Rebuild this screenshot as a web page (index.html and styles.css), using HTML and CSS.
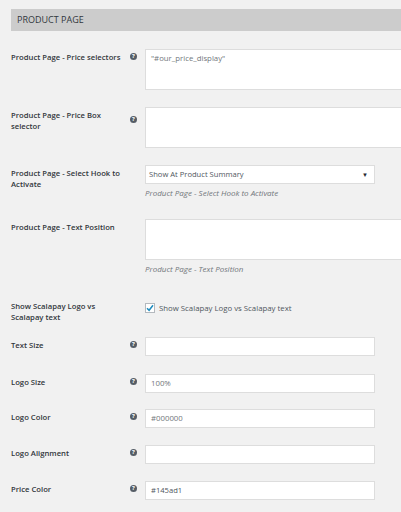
FILE: index.html
```html
<!DOCTYPE html>
<html>
<head>
<meta charset="utf-8">
<link rel="stylesheet" href="styles.css">
</head>
<body>
<div class="page">
  <div class="header">PRODUCT PAGE</div>

  <div class="row r1">
    <div class="lab"><span class="txt">Product Page - Price selectors</span><span class="help">?</span></div>
    <div class="field"><div class="area"><span class="val">"#our_price_display"</span></div></div>
  </div>

  <div class="row r2">
    <div class="lab"><span class="txt">Product Page - Price Box selector</span><span class="help">?</span></div>
    <div class="field"><div class="area"></div></div>
  </div>

  <div class="row r3">
    <div class="lab"><span class="txt">Product Page - Select Hook to Activate</span></div>
    <div class="field">
      <div class="select"><span class="val dark">Show At Product Summary</span><span class="arrow">▼</span></div>
      <div class="desc">Product Page - Select Hook to Activate</div>
    </div>
  </div>

  <div class="row r4">
    <div class="lab"><span class="txt">Product Page - Text Position</span></div>
    <div class="field">
      <div class="area"></div>
      <div class="desc">Product Page - Text Position</div>
    </div>
  </div>

  <div class="row r5">
    <div class="lab"><span class="txt">Show Scalapay Logo vs Scalapay text</span></div>
    <div class="field check">
      <span class="box"><svg width="8" height="8" viewBox="0 0 8 8"><path d="M1 4.2 L3.1 6.3 L7 1.2" fill="none" stroke="#1e8cbe" stroke-width="1.5"/></svg></span>
      <span class="ctext">Show Scalapay Logo vs Scalapay text</span>
    </div>
  </div>

  <div class="row r6">
    <div class="lab"><span class="txt">Text Size</span><span class="help">?</span></div>
    <div class="field"><div class="input"></div></div>
  </div>

  <div class="row r7">
    <div class="lab"><span class="txt">Logo Size</span><span class="help">?</span></div>
    <div class="field"><div class="input"><span class="val">100%</span></div></div>
  </div>

  <div class="row r8">
    <div class="lab"><span class="txt">Logo Color</span><span class="help">?</span></div>
    <div class="field"><div class="input"><span class="val">#000000</span></div></div>
  </div>

  <div class="row r9">
    <div class="lab"><span class="txt">Logo Alignment</span><span class="help">?</span></div>
    <div class="field"><div class="input"></div></div>
  </div>

  <div class="row r10">
    <div class="lab"><span class="txt">Price Color</span><span class="help">?</span></div>
    <div class="field"><div class="input"><span class="val dark">#145ad1</span></div></div>
  </div>
</div>
</body>
</html>
```

FILE: styles.css
```css
html, body {
  margin: 0;
  padding: 0;
  background: #f1f1f1;
  overflow: hidden;
  width: 401px;
  height: 512px;
}
body {
  font-family: "Open Sans", "Liberation Sans", sans-serif;
  color: #23282d;
}
.page {
  padding: 9px 0 0 11px;
}
.header {
  background: #cccccc;
  height: 22px;
  line-height: 22px;
  padding-left: 6px;
  font-size: 9px;
  color: #32373c;
}
.row {
  display: flex;
  align-items: flex-start;
}
.lab {
  width: 134px;
  flex: none;
  display: flex;
  align-items: center;
  padding-top: 3px;
}
.txt {
  width: 118px;
  flex: none;
  font-size: 7.7px;
  font-weight: 600;
  line-height: 10.5px;
  color: #32373c;
}
.help {
  flex: none;
  width: 7px;
  height: 7px;
  border-radius: 50%;
  background: #555d66;
  color: #fff;
  font-size: 6px;
  font-weight: 700;
  line-height: 7px;
  text-align: center;
  margin-left: 1px;
  margin-top: -2px;
}
.field {
  flex: none;
}
.area {
  width: 270px;
  height: 41px;
  background: #fff;
  border: 1px solid #dddddd;
  box-sizing: border-box;
  padding: 2px 5px;
  font-size: 8px;
  line-height: 11px;
}
.input {
  width: 230px;
  height: 19px;
  background: #fff;
  border: 1px solid #dddddd;
  box-sizing: border-box;
  padding: 0 5px;
  display: flex;
  align-items: center;
}
.select {
  width: 230px;
  height: 19px;
  background: #fff;
  border: 1px solid #dddddd;
  box-sizing: border-box;
  padding: 0 3px 0 3px;
  display: flex;
  align-items: center;
  justify-content: space-between;
}
.val {
  font-size: 7.8px;
  color: #72777c;
  line-height: 11px;
}
.val.dark {
  color: #50575e;
  font-size: 7.6px;
}
.arrow {
  font-size: 6px;
  color: #23282d;
  margin-right: 3px;
}
.desc {
  font-size: 8px;
  font-style: italic;
  color: #72777c;
  margin-top: 3px;
  line-height: 11px;
}
.check {
  display: flex;
  align-items: center;
  padding-top: 5px;
}
.box {
  width: 10px;
  height: 10px;
  border: 1px solid #b4b9be;
  background: #fff;
  box-sizing: border-box;
  display: flex;
  align-items: center;
  justify-content: center;
  margin-right: 4px;
}
.ctext {
  font-size: 7.8px;
  color: #50575e;
}
.r1 { margin-top: 18px; }
.r2 { margin-top: 17px; }
.r3 { margin-top: 17px; }
.r4 { margin-top: 21px; }
.r5 { margin-top: 24px; }
.r6 { margin-top: 15px; }
.r7 { margin-top: 18px; }
.r8 { margin-top: 16px; }
.r9 { margin-top: 17px; }
.r10 { margin-top: 17px; }
```
